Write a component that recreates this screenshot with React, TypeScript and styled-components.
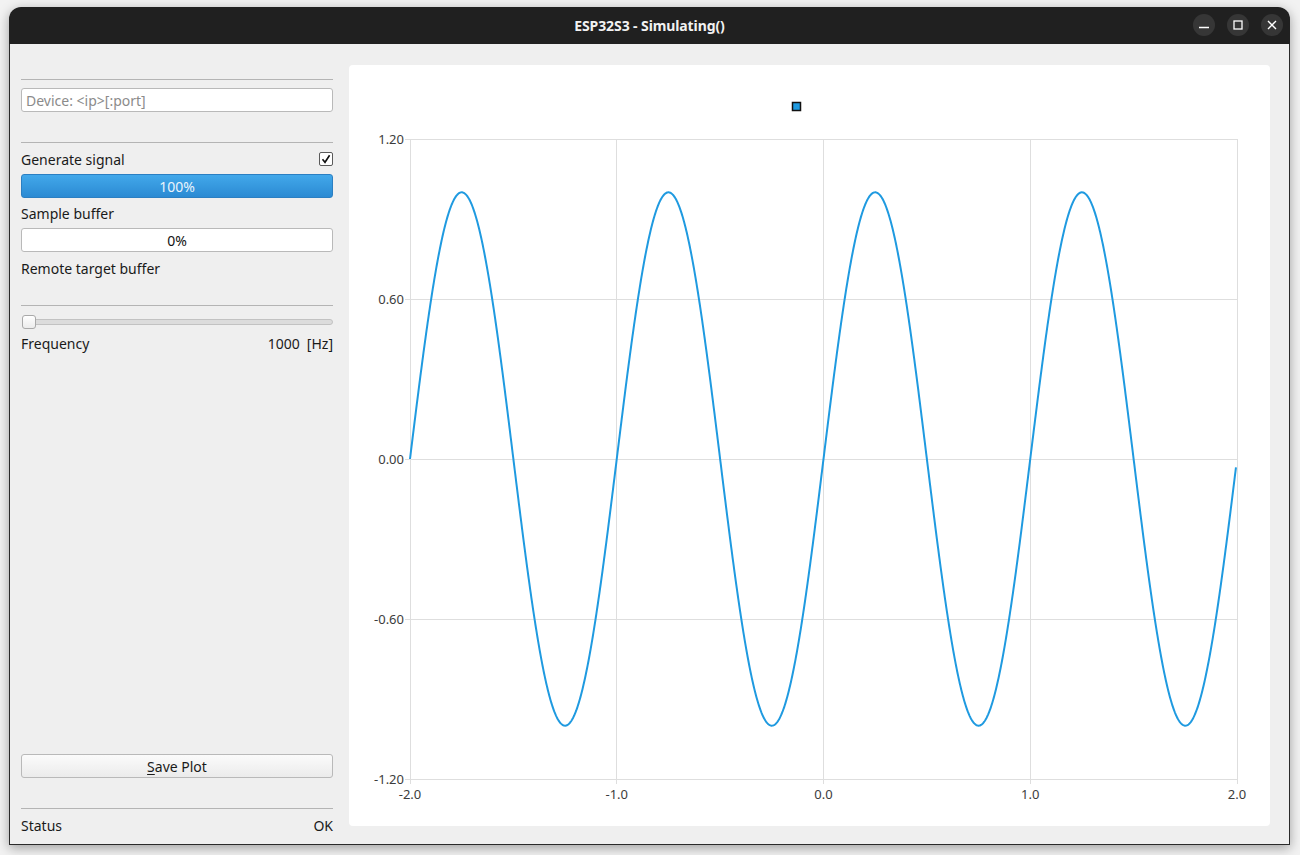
import styled, { createGlobalStyle } from "styled-components";

const GlobalStyle = createGlobalStyle`
  html, body {
    margin: 0;
    padding: 0;
    background: #f2f2f2;
    font-family: "Noto Sans", "DejaVu Sans", sans-serif;
  }
`;

const Desktop = styled.div`
  width: 1300px;
  height: 855px;
  padding: 7px 0 0 9px;
  box-sizing: border-box;
`;

const Window = styled.div`
  width: 1281px;
  height: 838px;
  display: flex;
  flex-direction: column;
  border-radius: 12px 12px 0 0;
  box-shadow: 0 3px 12px rgba(0, 0, 0, 0.35);
  background: #efefef;
  overflow: hidden;
`;

const TitleBar = styled.div`
  height: 37px;
  flex: none;
  background: #202020;
  display: flex;
  align-items: center;
  justify-content: center;
  position: relative;
`;

const Title = styled.div`
  color: #f2f2f2;
  font-weight: 700;
  font-size: 14px;
  letter-spacing: -0.1px;
`;

const WindowControls = styled.div`
  position: absolute;
  right: 7px;
  top: 7px;
  display: flex;
  gap: 12px;
`;

const ControlButton = styled.div`
  width: 22px;
  height: 22px;
  border-radius: 50%;
  background: #363636;
  display: flex;
  align-items: center;
  justify-content: center;
`;

const Body = styled.div`
  flex: 1;
  display: flex;
  border: 1px solid #2a2a2a;
  border-top: none;
`;

const Sidebar = styled.div`
  width: 312px;
  margin-left: 11px;
  padding: 35px 0 10px;
  display: flex;
  flex-direction: column;
  font-size: 14px;
  color: #1a1a1a;
`;

const Separator = styled.div<{ $top?: number }>`
  height: 1px;
  background: #b4b4b4;
  margin-top: ${(p) => p.$top ?? 0}px;
`;

const DeviceInput = styled.input`
  margin-top: 8px;
  height: 24px;
  box-sizing: border-box;
  border: 1px solid #b9b9b9;
  border-radius: 3px;
  background: #fff;
  padding: 0 4px;
  font: inherit;
  font-size: 14px;
  color: #222;
  &::placeholder {
    color: #8b8b8b;
  }
  &:focus {
    outline: none;
  }
`;

const Row = styled.div<{ $top: number }>`
  height: 18px;
  margin-top: ${(p) => p.$top}px;
  display: flex;
  align-items: center;
  justify-content: space-between;
  white-space: nowrap;
`;

const CheckBox = styled.div`
  width: 12px;
  height: 12px;
  border: 1px solid #5a5a5a;
  border-radius: 2px;
  background: #fff;
  display: flex;
  align-items: center;
  justify-content: center;
`;

const Bar = styled.div<{ $filled?: boolean }>`
  margin-top: 6px;
  height: 24px;
  box-sizing: border-box;
  border-radius: 3px;
  display: flex;
  align-items: center;
  justify-content: center;
  font-size: 14px;
  border: 1px solid ${(p) => (p.$filled ? "#2b7fc2" : "#b9b9b9")};
  background: ${(p) =>
    p.$filled ? "linear-gradient(#42a8ea, #2b8ad3)" : "#ffffff"};
  color: ${(p) => (p.$filled ? "#eaf4fc" : "#111")};
`;

const Slider = styled.div`
  margin-top: 9px;
  height: 14px;
  display: flex;
  align-items: center;
  position: relative;
`;

const Groove = styled.div`
  flex: 1;
  height: 4px;
  margin-left: 1px;
  border: 1px solid #c2c2c2;
  border-radius: 3px;
  background: #dcdcdc;
`;

const Handle = styled.div`
  position: absolute;
  left: 1px;
  top: 0;
  width: 12px;
  height: 12px;
  border: 1px solid #a9a9a9;
  border-radius: 3px;
  background: linear-gradient(#ffffff, #ececec);
`;

const Unit = styled.span`
  margin-left: 7px;
`;

const Spacer = styled.div`
  flex: 1;
`;

const Button = styled.button`
  height: 24px;
  box-sizing: border-box;
  border: 1px solid #b9b9b9;
  border-radius: 3px;
  background: linear-gradient(#fbfbfb, #ebebeb);
  font: inherit;
  font-size: 14px;
  color: #1a1a1a;
  padding: 0;
  u {
    text-underline-offset: 2px;
  }
`;

const ChartArea = styled.div`
  flex: 1;
  padding: 21px 19px 18px 16px;
  display: flex;
`;

const ChartCard = styled.div`
  flex: 1;
  background: #ffffff;
  border-radius: 4px;
  overflow: hidden;
`;

const Plot = styled.svg`
  display: block;
  width: 921px;
  height: 760px;
  font-family: "Noto Sans", "DejaVu Sans", sans-serif;
  font-size: 13px;
`;

// plot geometry inside the card
const PL = 61;
const PR = 888;
const PT = 74;
const PB = 714;
const xs = (x: number) => PL + ((x + 2) / 4) * (PR - PL);
const ys = (y: number) => PT + ((1.2 - y) / 2.4) * (PB - PT);

const sinePath = (() => {
  const pts: string[] = [];
  for (let i = 0; i <= 1600; i++) {
    const x = -2 + (i / 1600) * 3.995;
    const y = Math.sin(2 * Math.PI * x);
    pts.push(`${xs(x).toFixed(2)},${ys(y).toFixed(2)}`);
  }
  return "M" + pts.join("L");
})();

const yTicks = [1.2, 0.6, 0, -0.6, -1.2];
const xTicks = [-2, -1, 0, 1, 2];

const Chart = () => (
  <Plot viewBox="0 0 921 760">
    {xTicks.map((t) => (
      <line
        key={"gx" + t}
        x1={xs(t)}
        x2={xs(t)}
        y1={PT}
        y2={PB + 5}
        stroke="#dedede"
        strokeWidth={1}
        shapeRendering="crispEdges"
      />
    ))}
    {yTicks.map((t) => (
      <line
        key={"gy" + t}
        x1={PL - 5}
        x2={PR}
        y1={ys(t)}
        y2={ys(t)}
        stroke="#dedede"
        strokeWidth={1}
        shapeRendering="crispEdges"
      />
    ))}
    {yTicks.map((t) => (
      <text
        key={"ly" + t}
        x={PL - 6}
        y={ys(t) + 4.5}
        textAnchor="end"
        fill="#3c3c3c"
      >
        {t.toFixed(2)}
      </text>
    ))}
    {xTicks.map((t) => (
      <text
        key={"lx" + t}
        x={xs(t)}
        y={PB + 20}
        textAnchor="middle"
        fill="#3c3c3c"
      >
        {t.toFixed(1)}
      </text>
    ))}
    <rect
      x={443.5}
      y={37.5}
      width={8}
      height={8}
      fill="#1f9ae0"
      stroke="#111"
      strokeWidth={1.5}
    />
    <path d={sinePath} fill="none" stroke="#1f9ae0" strokeWidth={2} />
  </Plot>
);

export default function App() {
  return (
    <Desktop>
      <GlobalStyle />
      <Window>
        <TitleBar>
          <Title>ESP32S3 - Simulating()</Title>
          <WindowControls>
            <ControlButton>
              <svg width="12" height="12" viewBox="0 0 12 12">
                <line x1="1" y1="8.5" x2="11" y2="8.5" stroke="#fff" strokeWidth="1.4" />
              </svg>
            </ControlButton>
            <ControlButton>
              <svg width="12" height="12" viewBox="0 0 12 12">
                <rect x="2" y="2" width="8" height="8" fill="none" stroke="#fff" strokeWidth="1.3" />
              </svg>
            </ControlButton>
            <ControlButton>
              <svg width="12" height="12" viewBox="0 0 12 12">
                <path d="M2 2L10 10M10 2L2 10" stroke="#fff" strokeWidth="1.4" />
              </svg>
            </ControlButton>
          </WindowControls>
        </TitleBar>
        <Body>
          <Sidebar>
            <Separator />
            <DeviceInput placeholder="Device: <ip>[:port]" />
            <Separator $top={30} />
            <Row $top={7}>
              <span>Generate signal</span>
              <CheckBox>
                <svg width="10" height="10" viewBox="0 0 10 10">
                  <path d="M1.5 5.2L4 8.3L8.6 1.2" fill="none" stroke="#111" strokeWidth="1.6" />
                </svg>
              </CheckBox>
            </Row>
            <Bar $filled>100%</Bar>
            <Row $top={6}>
              <span>Sample buffer</span>
            </Row>
            <Bar>0%</Bar>
            <Row $top={7}>
              <span>Remote target buffer</span>
            </Row>
            <Separator $top={28} />
            <Slider>
              <Groove />
              <Handle />
            </Slider>
            <Row $top={5}>
              <span>Frequency</span>
              <span>
                1000<Unit>[Hz]</Unit>
              </span>
            </Row>
            <Spacer />
            <Button>
              <u>S</u>ave Plot
            </Button>
            <Separator $top={30} />
            <Row $top={7}>
              <span>Status</span>
              <span>OK</span>
            </Row>
          </Sidebar>
          <ChartArea>
            <ChartCard>
              <Chart />
            </ChartCard>
          </ChartArea>
        </Body>
      </Window>
    </Desktop>
  );
}
